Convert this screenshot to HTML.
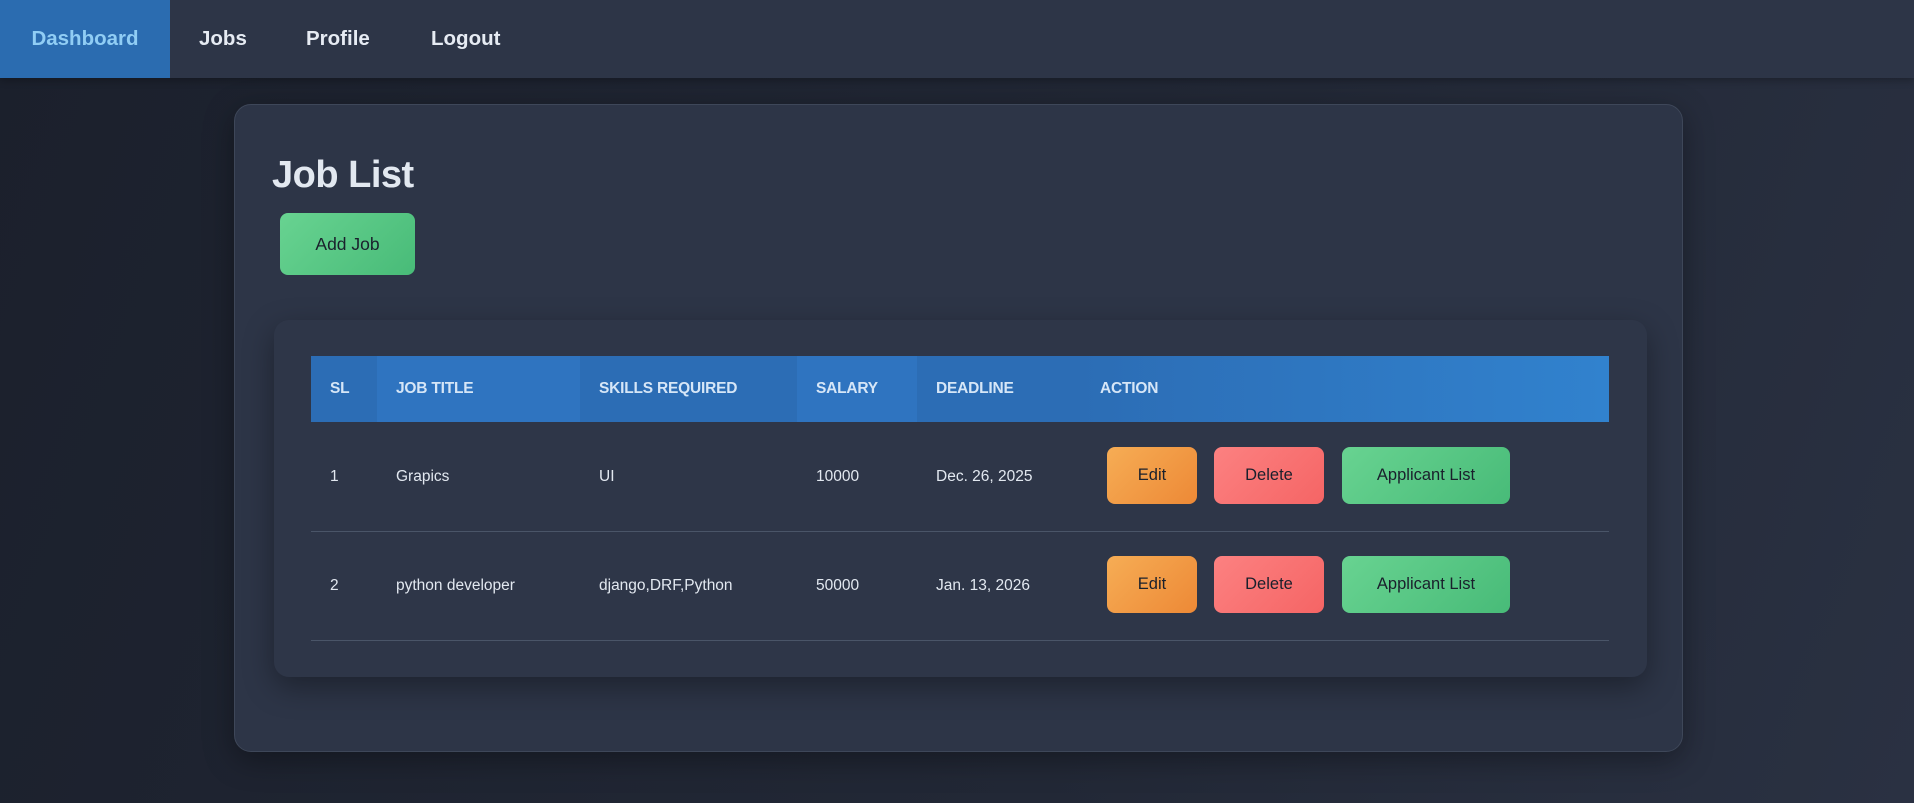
<!DOCTYPE html>
<html><head><meta charset="utf-8"><style>
*{box-sizing:border-box;margin:0;padding:0}
body{width:1914px;height:803px;overflow:hidden;font-family:"Liberation Sans",sans-serif;background:linear-gradient(110deg,#1b202c 0%,#222836 60%,#2a3142 100%);position:relative}
.nav{position:absolute;left:0;top:0;width:1914px;height:78px;background:#2d3547;box-shadow:0 2px 8px rgba(0,0,0,.3)}
.nav a{position:absolute;top:0;height:78px;line-height:78px;color:#e6ebf3;font-size:20.5px;font-weight:bold;text-decoration:none}
.nav .act{left:0;width:170px;background:#2b6cb0;color:#90cdf4;text-align:center}
.card{position:absolute;left:234px;top:104px;width:1449px;height:648px;background:#2d3547;border:1px solid #3e4759;border-radius:17px;box-shadow:0 8px 30px rgba(0,0,0,.35)}
h1{position:absolute;left:37px;top:49px;font-size:38px;color:#e2e8f0;font-weight:bold;letter-spacing:-0.5px}
.btn{position:absolute;border-radius:8px;color:#1a202c;font-size:16.5px;text-align:center}
.g{background:linear-gradient(135deg,#68d391,#48bb78)}
.o{background:linear-gradient(135deg,#f6ad55,#ed8936)}
.r{background:linear-gradient(135deg,#fc8181,#f56565)}
.panel{position:absolute;left:39px;top:215px;width:1373px;height:357px;background:#2e3648;border-radius:15px;box-shadow:0 10px 30px rgba(0,0,0,.35)}
.th{position:absolute;top:36px;height:66px;line-height:66px;color:#d6e6f7;font-weight:bold;font-size:15.5px;padding-left:19px;background:#2e73bd;letter-spacing:-0.2px}
.td{position:absolute;color:#e2e8f0;font-size:15.5px;padding-left:19px;line-height:20px}
.line{position:absolute;left:37px;width:1298px;height:1px;background:#4a5568}
</style></head><body>
<div class="nav">
<a class="act">Dashboard</a>
<a style="left:199px">Jobs</a>
<a style="left:306px">Profile</a>
<a style="left:431px">Logout</a>
</div>
<div class="card">
<h1>Job List</h1>
<div class="btn g" style="left:45px;top:108px;width:135px;height:62px;line-height:62px;font-size:17.5px">Add Job</div>
<div class="panel">
<div class="th" style="left:37px;width:66px;background:#2c6db5">SL</div>
<div class="th" style="left:103px;width:203px;background:#2f74c0">JOB TITLE</div>
<div class="th" style="left:306px;width:217px;background:#2c6db5">SKILLS REQUIRED</div>
<div class="th" style="left:523px;width:120px;background:#2f74c0">SALARY</div>
<div class="th" style="left:643px;width:164px;background:#2c6db5">DEADLINE</div>
<div class="th" style="left:807px;width:528px;background:linear-gradient(90deg,#2c6db5,#3182ce)">ACTION</div>
<div class="td" style="left:37px;top:147px">1</div>
<div class="td" style="left:103px;top:147px">Grapics</div>
<div class="td" style="left:306px;top:147px">UI</div>
<div class="td" style="left:523px;top:147px">10000</div>
<div class="td" style="left:643px;top:147px">Dec. 26, 2025</div>
<div class="btn o" style="left:833px;top:127px;width:90px;height:57px;line-height:57px">Edit</div>
<div class="btn r" style="left:940px;top:127px;width:110px;height:57px;line-height:57px">Delete</div>
<div class="btn g" style="left:1068px;top:127px;width:168px;height:57px;line-height:57px">Applicant List</div>
<div class="line" style="top:211px"></div>
<div class="td" style="left:37px;top:256px">2</div>
<div class="td" style="left:103px;top:256px">python developer</div>
<div class="td" style="left:306px;top:256px">django,DRF,Python</div>
<div class="td" style="left:523px;top:256px">50000</div>
<div class="td" style="left:643px;top:256px">Jan. 13, 2026</div>
<div class="btn o" style="left:833px;top:236px;width:90px;height:57px;line-height:57px">Edit</div>
<div class="btn r" style="left:940px;top:236px;width:110px;height:57px;line-height:57px">Delete</div>
<div class="btn g" style="left:1068px;top:236px;width:168px;height:57px;line-height:57px">Applicant List</div>
<div class="line" style="top:320px"></div>
</div>
</div>
</body></html>
